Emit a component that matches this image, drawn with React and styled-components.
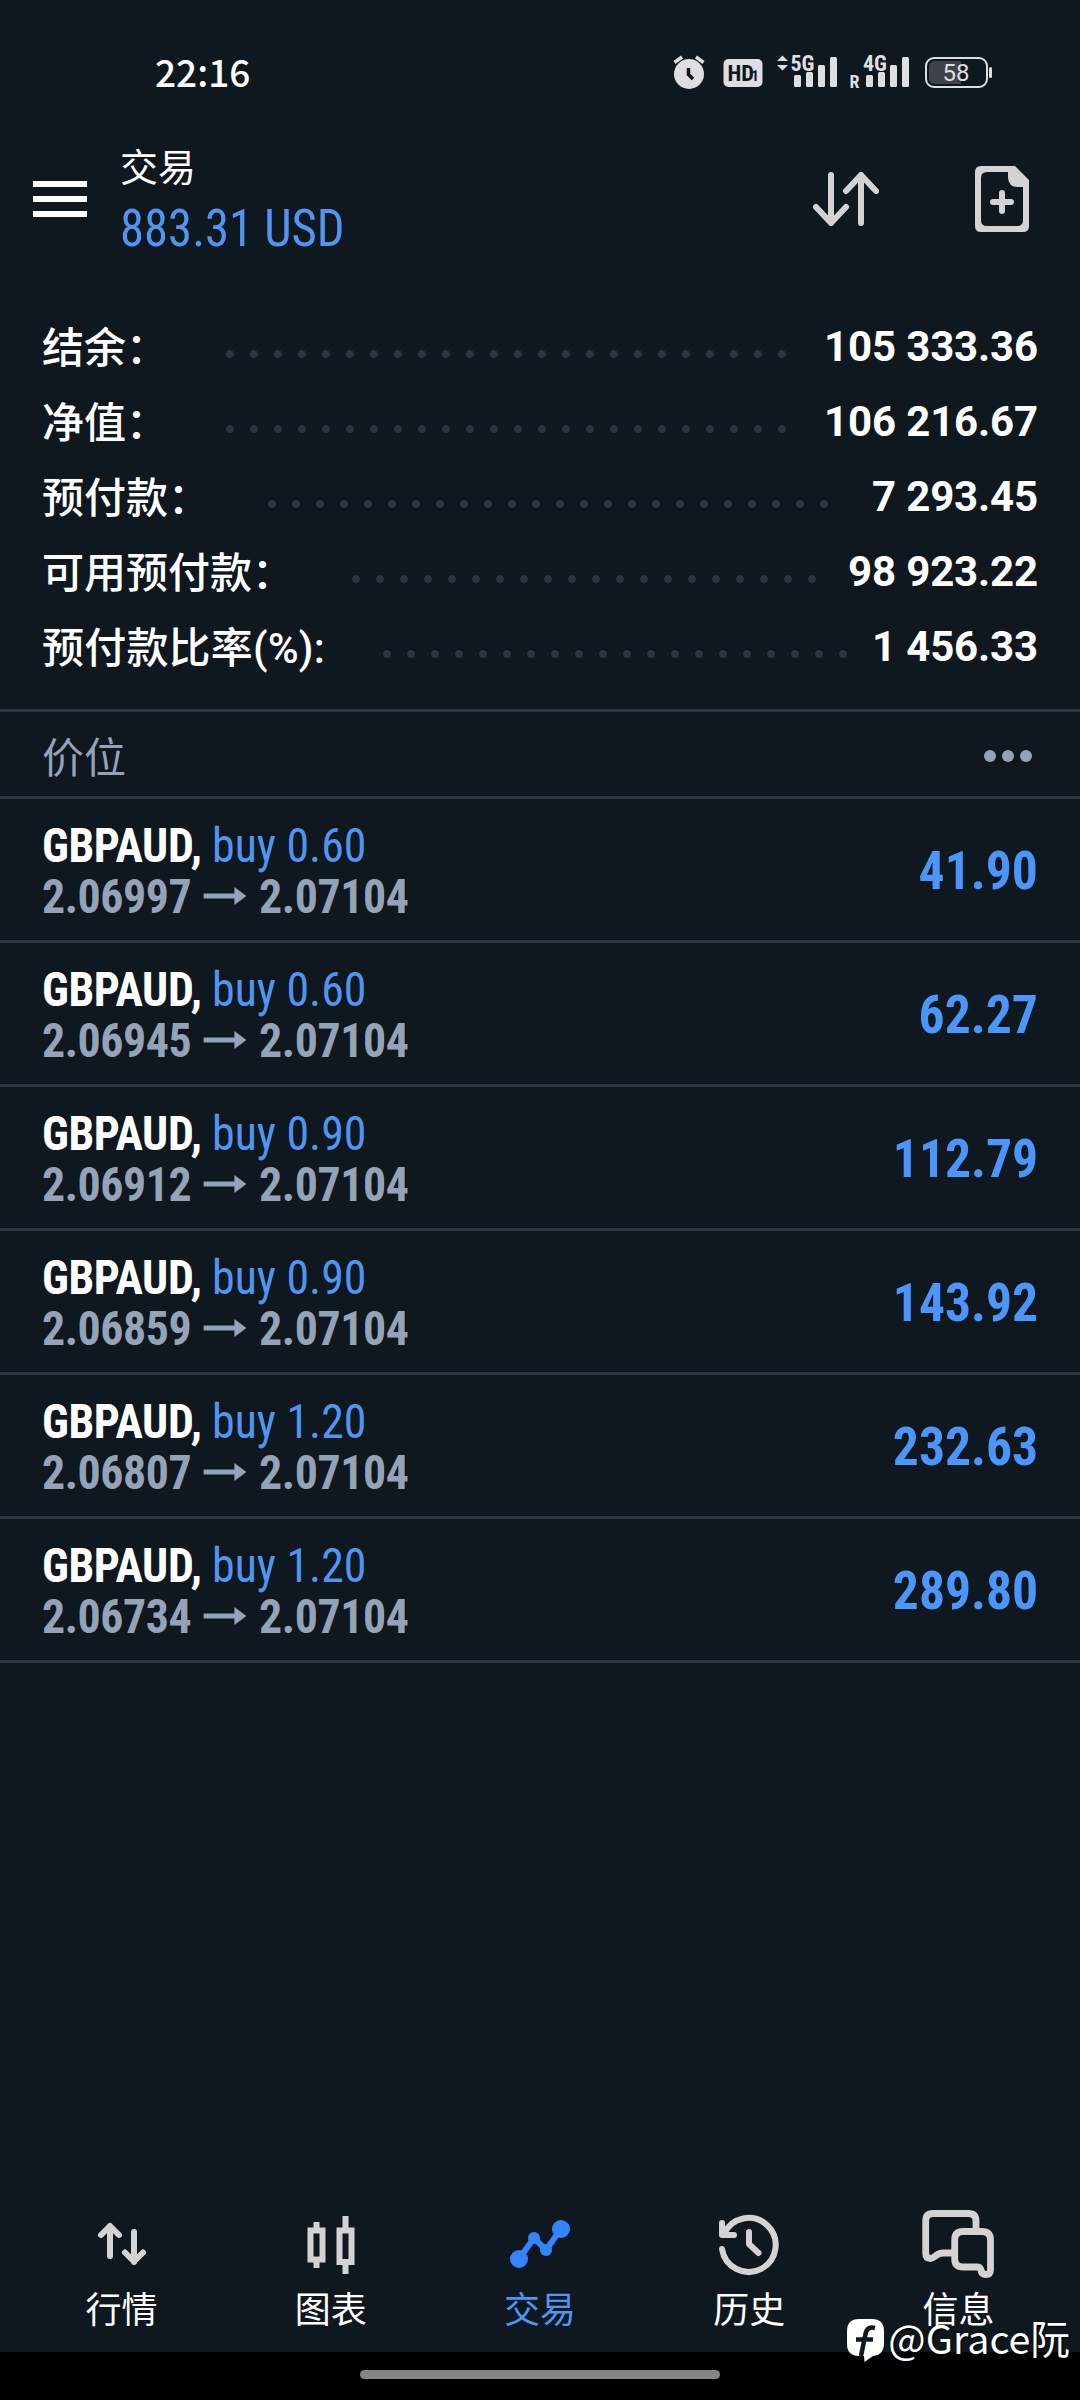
import React from "react";
import styled, { createGlobalStyle } from "styled-components";

const summary = [
  { label: "结余：", value: "105 333.36", dots: 24 },
  { label: "净值：", value: "106 216.67", dots: 24 },
  { label: "预付款：", value: "7 293.45", dots: 24 },
  { label: "可用预付款：", value: "98 923.22", dots: 20 },
  { label: "预付款比率(%):", value: "1 456.33", dots: 20 },
];

const positions = [
  { volume: "0.60", open: "2.06997", profit: "41.90" },
  { volume: "0.60", open: "2.06945", profit: "62.27" },
  { volume: "0.90", open: "2.06912", profit: "112.79" },
  { volume: "0.90", open: "2.06859", profit: "143.92" },
  { volume: "1.20", open: "2.06807", profit: "232.63" },
  { volume: "1.20", open: "2.06734", profit: "289.80" },
];

export default function App() {
  return (
    <Screen>
      <GlobalStyle />
      <StatusBar>
        <Time>22:16</Time>
        <StatusIcons />
      </StatusBar>
      <Header>
        <MenuButton>
          <i />
          <i />
          <i />
        </MenuButton>
        <Title>
          <h1>交易</h1>
          <Balance>883.31 USD</Balance>
        </Title>
        <SortIcon />
        <NewOrderIcon />
      </Header>
      <Summary>
        {summary.map((row) => (
          <SummaryRow key={row.label}>
            <dt>{row.label}</dt>
            <Leader $dots={row.dots} />
            <dd>{row.value}</dd>
          </SummaryRow>
        ))}
      </Summary>
      <SectionBar>
        <span>价位</span>
        <MoreButton>
          <i />
          <i />
          <i />
        </MoreButton>
      </SectionBar>
      <Positions>
        {positions.map((item) => (
          <Position key={item.open}>
            <Details>
              <Deal>
                <b>GBPAUD,</b>
                <span>buy {item.volume}</span>
              </Deal>
              <Prices>
                <span>{item.open}</span>
                <svg width="45" height="20" viewBox="0 0 43 20" preserveAspectRatio="none">
                  <path d="M0 7.5H31V1L43 10L31 19V12.5H0Z" fill="currentColor" />
                </svg>
                <span>2.07104</span>
              </Prices>
            </Details>
            <Profit>{item.profit}</Profit>
          </Position>
        ))}
      </Positions>
      <TabBar>
        <Tab>
          <QuotesIcon />
          行情
        </Tab>
        <Tab>
          <ChartIcon />
          图表
        </Tab>
        <Tab $active>
          <TradeIcon />
          交易
        </Tab>
        <Tab>
          <HistoryIcon />
          历史
        </Tab>
        <Tab>
          <MessagesIcon />
          信息
        </Tab>
      </TabBar>
      <SystemBar>
        <i />
      </SystemBar>
      <Watermark>
        <svg width="37" height="43" viewBox="0 0 37 43">
          <path
            d="M12 0H25Q37 0 37 12V24Q37 36 26 37L17.500 43L17 37H12Q0 37 0 25V12Q0 0 12 0Z"
            fill="#fff"
          />
          <path
            d="M28 9Q20 7 18.500 15L14 37M9 20.500H26"
            fill="none"
            stroke="#0f171f"
            strokeWidth="4.500"
          />
        </svg>
        <span>@Grace阮</span>
      </Watermark>
    </Screen>
  );
}

function StatusIcons() {
  return (
    <svg width="320" height="48" viewBox="672 48 320 48" fill="#dcdee2">
      <circle cx="689" cy="74" r="15" />
      <path d="M674.500 62.500L682 57M703.500 62.500L696 57" stroke="#dcdee2" strokeWidth="3.500" />
      <path d="M688.500 68V74.500L693 79" fill="none" stroke="#0f171f" strokeWidth="3.500" />
      <rect x="723.500" y="59" width="39" height="28" rx="5" />
      <StatusText x="727.500" y="81" fontSize="22.500" $bold fill="#0f171f">HD</StatusText>
      <text x="751" y="81" fontSize="14" fontWeight="700" fill="#0f171f">1</text>
      <path d="M782.500 55.500L788 61H777ZM782.500 70.500L788 65H777Z" />
      <StatusText x="790.500" y="70.500" fontSize="22" $bold>5G</StatusText>
      <Bars x={794} />
      <StatusText x="849.500" y="88" fontSize="18" $bold>R</StatusText>
      <StatusText x="863" y="70.500" fontSize="22" $bold>4G</StatusText>
      <Bars x={866} />
      <rect x="926" y="58" width="61" height="29" rx="8" fill="none" stroke="#dcdee2" strokeWidth="2" />
      <path d="M935 61H961V84H935Q929 84 929 78V67Q929 61 935 61Z" fill="#3e4249" />
      <text x="942.500" y="81" fontSize="24" textLength="27">58</text>
      <rect x="989" y="67" width="3" height="11" rx="1.500" />
    </svg>
  );
}

function Bars({ x }) {
  return (
    <>
      <rect x={x} y="75" width="7" height="12" rx="1.500" />
      <rect x={x + 12} y="72" width="7" height="15" rx="1.500" />
      <rect x={x + 24} y="65" width="7" height="22" rx="1.500" />
      <rect x={x + 36} y="57" width="7" height="30" rx="1.500" />
    </>
  );
}

function SortIcon() {
  return (
    <LineIcon width="66" height="54" viewBox="813 172 66 54">
      <path d="M831 175V223M816 207L831 223L846 207M861 223V175M846 191L861 175L876 191" />
    </LineIcon>
  );
}

function NewOrderIcon() {
  return (
    <LineIcon width="54" height="66" viewBox="975 166 54 66">
      <path
        d="M981 166H1015L1029 180V226Q1029 232 1023 232H981Q975 232 975 226V172Q975 166 981 166ZM987 172Q981 172 981 178V220Q981 226 987 226H1017Q1023 226 1023 220V187H1018Q1008 187 1008 177V172Z"
        fill="#d3d3d5"
        stroke="none"
        fillRule="evenodd"
      />
      <path d="M993 202H1011M1002 193V211" />
    </LineIcon>
  );
}

function QuotesIcon() {
  return (
    <LineIcon width="72" height="72" viewBox="86 2208 72 72">
      <path d="M110 2256V2226M101 2235L110 2226L119 2235M134 2232V2262M125 2252.500L134 2261.500L143 2252.500" />
    </LineIcon>
  );
}

function ChartIcon() {
  return (
    <LineIcon width="72" height="72" viewBox="295 2208 72 72" strokeLinecap="butt" strokeLinejoin="miter">
      <rect x="310.500" y="2230.500" width="12" height="29" />
      <rect x="339.500" y="2230.500" width="12" height="31.500" />
      <path d="M316.500 2222V2229M316.500 2261V2268M345.500 2216V2229M345.500 2263V2274" />
    </LineIcon>
  );
}

function TradeIcon() {
  return (
    <LineIcon width="72" height="72" viewBox="504 2208 72 72" $color="#3584ff">
      <path d="M519 2259L534 2238L546 2250L561 2229" />
      <g fill="#3584ff" stroke="none">
        <circle cx="519" cy="2259" r="9" />
        <circle cx="534" cy="2238" r="6" />
        <circle cx="546" cy="2250" r="6" />
        <circle cx="561" cy="2229" r="9" />
      </g>
    </LineIcon>
  );
}

function HistoryIcon() {
  return (
    <LineIcon width="72" height="72" viewBox="713 2208 72 72">
      <path d="M722 2249A27 27 0 1 0 724 2234M722 2223V2235H734M749 2232V2244L758.500 2253" />
    </LineIcon>
  );
}

function MessagesIcon() {
  return (
    <LineIcon width="74" height="72" viewBox="921 2208 74 72" $weight={6.8}>
      <path d="M976 2230V2221Q976 2213.500 968.500 2213.500H933Q925.700 2213.500 925.700 2221V2253Q925.700 2258.500 930.500 2258.500C935 2258.500 936 2253 943 2253H951" />
      <path d="M963 2231.500H982Q990.500 2231.500 990.500 2240V2270Q990.500 2274.500 986 2274.500Q981.500 2274.500 981 2270Q980 2267 977 2267H963Q954.700 2267 954.700 2259V2240Q954.700 2231.500 963 2231.500Z" />
    </LineIcon>
  );
}

const GlobalStyle = createGlobalStyle`
  * {
    margin: 0;
    padding: 0;
    box-sizing: border-box;
  }

  body {
    background: #0f171f;
  }
`;

const Screen = styled.div`
  position: relative;
  display: flex;
  flex-direction: column;
  width: 1080px;
  height: 2400px;
  overflow: hidden;
  background: #0f171f;
  color: #fff;
  font-family: "Roboto", "Noto Sans CJK SC", sans-serif;
`;

const StatusBar = styled.div`
  display: flex;
  justify-content: space-between;
  align-items: center;
  height: 144px;
  padding: 0 88px 0 155px;
`;

const Time = styled.span`
  padding-bottom: 3px;
  font-family: "Noto Sans CJK SC", sans-serif;
  font-size: 37px;
  font-weight: 500;
`;

const StatusText = styled.text`
  font-family: "Roboto Condensed", "Roboto", sans-serif;
  font-stretch: 75%;
  font-weight: ${(props) => (props.$bold ? 700 : 400)};
`;

const LineIcon = styled.svg`
  flex: none;
  fill: none;
  stroke: ${(props) => props.$color || "#d3d3d5"};
  stroke-width: ${(props) => props.$weight || 6};
  stroke-linecap: ${(props) => props.strokeLinecap || "round"};
  stroke-linejoin: ${(props) => props.strokeLinejoin || "round"};
`;

const Header = styled.header`
  display: flex;
  align-items: center;
  height: 110px;
  padding: 0 51px 0 33px;

  > svg:last-child {
    margin-left: 96px;
  }
`;

const MenuButton = styled.div`
  display: flex;
  flex-direction: column;
  gap: 9px;
  width: 54px;

  i {
    height: 6px;
    background: #fff;
  }
`;

const Title = styled.div`
  flex: 1;
  margin-left: 33px;

  h1 {
    font-size: 38px;
    font-weight: 400;
    line-height: 50px;
  }
`;

const Balance = styled.div`
  padding-top: 6px;
  margin-bottom: -3px;
  color: #5095f2;
  font-family: "Roboto Condensed", "Roboto", sans-serif;
  font-stretch: 75%;
  font-size: 51px;
  line-height: 60px;
  transform: scaleX(0.955);
  transform-origin: left;
`;

const Summary = styled.dl`
  display: flex;
  flex-direction: column;
  padding: 55px 42px 0;
  height: 455px;
`;

const SummaryRow = styled.div`
  display: flex;
  align-items: center;
  height: 75px;

  dt {
    padding-bottom: 5px;
    font-size: 42px;
    font-weight: 500;
    white-space: nowrap;
  }

  &:last-child dt {
    letter-spacing: 0.2px;
  }

  dd {
    margin-left: auto;
    font-size: 42px;
    font-weight: 700;
    letter-spacing: -0.15px;
  }
`;

const Leader = styled.div`
  width: ${(props) => props.$dots * 24}px;
  height: 8px;
  margin: 15px 0 0 58px;
  background: radial-gradient(circle at 4px 4px, #2d3442 3.500px, transparent 4.300px);
  background-size: 24px 8px;
`;

const SectionBar = styled.div`
  display: flex;
  align-items: center;
  justify-content: space-between;
  height: 90px;
  padding: 0 48px 0 42px;
  border-top: 3px solid #2d3442;
  border-bottom: 3px solid #2d3442;
  color: #94a3b8;
  font-size: 42px;
`;

const MoreButton = styled.div`
  display: flex;
  gap: 6px;
  padding-top: 4px;

  i {
    width: 12px;
    height: 12px;
    border-radius: 50%;
    background: #94a3b8;
  }
`;

const Positions = styled.div`
  flex: 1;
`;

const Position = styled.div`
  display: flex;
  align-items: center;
  justify-content: space-between;
  height: 144px;
  padding: 2px 42px 0;
  border-bottom: 3px solid #2d3442;
  font-family: "Roboto Condensed", "Roboto", sans-serif;
  font-stretch: 75%;
  font-size: 48px;
`;

const Details = styled.div`
  transform: scaleX(0.955);
  transform-origin: left;
`;

const Deal = styled.div`
  display: flex;
  gap: 11px;
  line-height: 51px;
  letter-spacing: -0.4px;

  span {
    color: #5095f2;
    letter-spacing: 0;
  }
`;

const Prices = styled.div`
  display: flex;
  align-items: center;
  gap: 13px;
  color: #94a3b8;
  font-weight: 700;
  line-height: 51px;
  letter-spacing: -0.45px;
`;

const Profit = styled.div`
  color: #4b96fb;
  font-size: 54px;
  font-weight: 700;
  transform: scaleX(0.955);
  transform-origin: right;
`;

const TabBar = styled.nav`
  display: flex;
  height: 160px;
  padding: 0 17px;
`;

const Tab = styled.div`
  flex: 1;
  display: flex;
  flex-direction: column;
  align-items: center;
  padding-top: 16px;
  color: ${(props) => (props.$active ? "#5095f2" : "#fff")};
  font-size: 36px;
  line-height: 63px;
`;

const SystemBar = styled.div`
  display: flex;
  justify-content: center;
  height: 48px;
  padding-top: 18px;
  background: #000;

  i {
    width: 360px;
    height: 9px;
    border-radius: 5px;
    background: #848484;
  }
`;

const Watermark = styled.div`
  position: absolute;
  right: 10px;
  bottom: 38px;
  display: flex;
  align-items: center;
  gap: 4px;
  font-family: "Noto Sans CJK SC", sans-serif;
  font-size: 39.5px;
  line-height: 50px;
  text-shadow: 1px 1px 2px #000;

  svg {
    flex: none;
    margin-top: 6px;
  }
`;
